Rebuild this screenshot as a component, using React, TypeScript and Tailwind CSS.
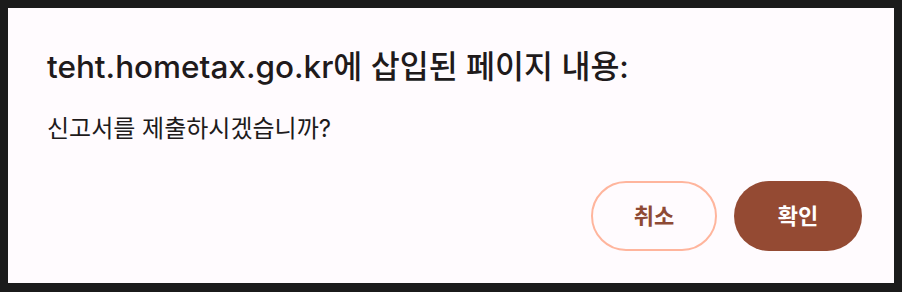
export default function App() {
  return (
    <div className="w-[902px] h-[292px] bg-[#1b1b1b] p-2" style={{ fontFamily: 'Inter, "Noto Sans CJK KR", sans-serif' }}>
      <div className="w-[886px] h-[275px] bg-[#fffbfe] pl-[39px] pr-[32px] pt-[41px] flex flex-col">
        <h1 className="text-[31.5px] leading-[36px] font-medium text-[#201a1b]">
          teht.hometax.go.kr에 삽입된 페이지 내용:
        </h1>
        <p className="mt-[28px] text-[24px] leading-[32px] text-[#201a1b]">신고서를 제출하시겠습니까?</p>
        <div className="mt-[36px] flex justify-end gap-[17px]">
          <button className="w-[126px] h-[70px] rounded-full border-2 border-[#ffb59d] text-[#8e4a35] text-[22px] font-bold">
            취소
          </button>
          <button className="w-[128px] h-[70px] rounded-full bg-[#944a33] text-white text-[22px] font-bold">
            확인
          </button>
        </div>
      </div>
    </div>
  );
}
